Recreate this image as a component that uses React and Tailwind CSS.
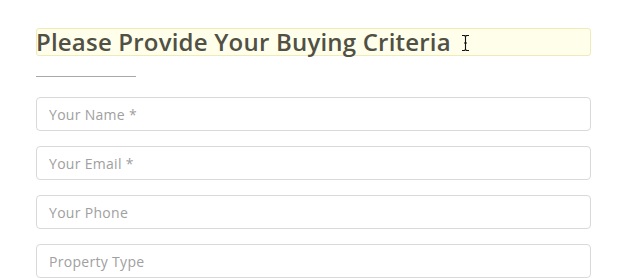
import React from "react";

function CursorIcon() {
  return (
    <svg width="9" height="18" viewBox="0 0 9 18" className="ml-[10px] mt-[2px]" aria-hidden="true">
      <path d="M1 1.5h2.5L4.5 2.5 5.5 1.5H8M4.5 2.5v13M1 16.5h2.5l1-1 1 1H8M3 9h3" fill="none" stroke="#111" strokeWidth="1.1" />
    </svg>
  );
}

const fields = ["Your Name *", "Your Email *", "Your Phone", "Property Type"];

export default function App() {
  return (
    <div className="bg-white w-[636px] h-[278px] overflow-hidden pl-[36px] pr-[45px] pt-[28px]">
      <div className="h-[28px] bg-[#fffeeb] border border-[#efeab8] rounded-[3px] flex items-center">
        <h2 className="text-[24px] leading-none font-semibold text-[#505045] tracking-[0.2px] -ml-px" style={{ fontFamily: "'Open Sans', sans-serif" }}>
          Please Provide Your Buying Criteria
        </h2>
        <CursorIcon />
      </div>
      <div className="w-[100px] h-px bg-[#a8a8a8] mt-[20px]" />
      <form className="flex flex-col gap-[15px] mt-[20px]">
        {fields.map((f) => (
          <input
            key={f}
            type="text"
            placeholder={f}
            className="h-[34px] w-full border border-[#d9d9d9] rounded-[4px] px-[12px] text-[14px] tracking-[0.3px] text-[#555] placeholder:text-[#a0a0a0] outline-none"
            style={{ fontFamily: "'Open Sans', sans-serif" }}
          />
        ))}
      </form>
    </div>
  );
}
